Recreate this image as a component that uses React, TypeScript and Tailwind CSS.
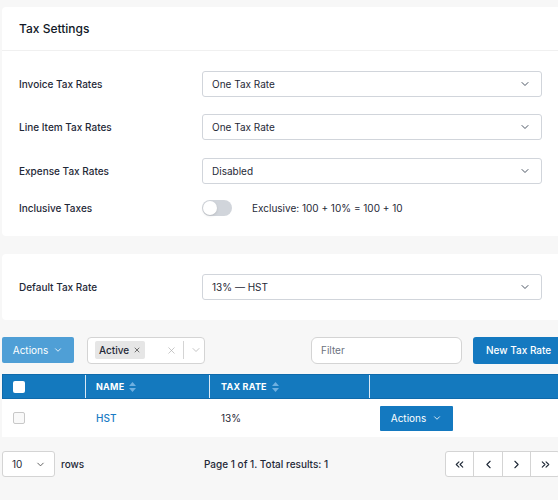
import { ChevronDown, ChevronLeft, ChevronRight, ChevronsLeft, ChevronsRight, X } from "lucide-react";

const font = { fontFamily: "Inter, 'Noto Sans', sans-serif" };

function Select({ value }: { value: string }) {
  return (
    <div className="flex h-[26px] w-[340px] items-center justify-between rounded-[3px] border border-[#d1d5db] bg-white pl-[9px] pr-[10px] text-[10px] text-[#1f2937]">
      <span>{value}</span>
      <ChevronDown className="h-[12px] w-[12px] text-[#4b5563]" strokeWidth={2} />
    </div>
  );
}

function Row({ label, children }: { label: string; children: React.ReactNode }) {
  return (
    <div className="flex items-center">
      <div className="w-[183px] text-[10px] font-medium text-[#1f2937]">{label}</div>
      {children}
    </div>
  );
}

function SortIcon() {
  return (
    <svg width="7" height="10" viewBox="0 0 7 10" className="ml-[5px]">
      <path d="M3.5 0 L7 4 H0 Z" fill="#6fb0e0" />
      <path d="M3.5 10 L7 6 H0 Z" fill="#6fb0e0" />
    </svg>
  );
}

export default function App() {
  return (
    <div className="h-[500px] w-[558px] overflow-hidden bg-[#f7f7f7]" style={font}>
      <div className="w-[600px] pl-[2px] pt-[7px]">
        {/* Tax settings card */}
        <div className="rounded-[4px] bg-white">
          <div className="flex h-[44px] items-center border-b border-[#f0f0f0] pl-[17px] text-[12px] font-medium text-[#111827]">
            Tax Settings
          </div>
          <div className="flex flex-col pl-[17px] pt-[20px] pb-[20px]">
            <Row label="Invoice Tax Rates">
              <Select value="One Tax Rate" />
            </Row>
            <div className="mt-[17px]">
              <Row label="Line Item Tax Rates">
                <Select value="One Tax Rate" />
              </Row>
            </div>
            <div className="mt-[18px]">
              <Row label="Expense Tax Rates">
                <Select value="Disabled" />
              </Row>
            </div>
            <div className="mt-[16px]">
              <Row label="Inclusive Taxes">
                <div className="flex items-center">
                  <div className="flex h-[16px] w-[30px] items-center rounded-full bg-[#d1d5db] px-[1px]">
                    <div className="h-[14px] w-[14px] rounded-full bg-white shadow-sm" />
                  </div>
                  <span className="ml-[20px] text-[10px] text-[#1f2937]">Exclusive: 100 + 10% = 100 + 10</span>
                </div>
              </Row>
            </div>
          </div>
        </div>

        {/* Default tax rate card */}
        <div className="mt-[18px] rounded-[4px] bg-white py-[20px] pl-[17px]">
          <Row label="Default Tax Rate">
            <Select value="13% — HST" />
          </Row>
        </div>

        {/* Toolbar */}
        <div className="mt-[17px] flex h-[26px] items-center whitespace-nowrap">
          <div className="flex h-[26px] w-[72px] shrink-0 items-center justify-center gap-[5px] rounded-[2px] bg-[#4f9fd6] text-[10px] text-white">
            Actions
            <ChevronDown className="h-[10px] w-[10px]" strokeWidth={2} />
          </div>
          <div className="ml-[13px] flex h-[27px] w-[118px] shrink-0 items-center rounded-[4px] border border-[#d4d4d4] bg-white pl-[7px]">
            <div className="flex h-[18px] items-center gap-[4px] rounded-[2px] bg-[#e6e6e6] px-[4px] text-[10px] font-medium text-[#1f2937]">
              Active
              <X className="h-[8px] w-[8px] text-[#555]" strokeWidth={2.5} />
            </div>
            <X className="ml-[21px] h-[11px] w-[11px] text-[#b0b0b0]" strokeWidth={1.5} />
            <div className="ml-[6px] h-[18px] w-px bg-[#d4d4d4]" />
            <ChevronDown className="ml-[6px] h-[12px] w-[12px] text-[#b0b0b0]" strokeWidth={1.5} />
          </div>
          <div className="ml-[106px] flex h-[27px] w-[151px] shrink-0 items-center rounded-[6px] border border-[#d4d4d4] bg-white pl-[9px] text-[10px] text-[#6b7280]">
            Filter
          </div>
          <div className="ml-[11px] flex h-[27px] w-[90px] shrink-0 items-center rounded-[3px] bg-[#1479c0] pl-[13px] text-[10px] font-medium text-white">
            New Tax Rate
          </div>
        </div>

        {/* Table */}
        <div className="mt-[11px] w-[590px] bg-white">
          <div className="flex h-[25px] border border-[#0f6aab] bg-[#1479be] text-[9px] font-bold tracking-wide text-white">
            <div className="flex w-[83px] items-center border-r border-[#d9e8f4] pl-[10px]">
              <div className="h-[12px] w-[12px] rounded-[2px] bg-white" />
            </div>
            <div className="flex w-[124px] items-center border-r border-[#d9e8f4] pl-[10px]">
              NAME
              <SortIcon />
            </div>
            <div className="flex w-[160px] items-center border-r border-[#d9e8f4] pl-[11px]">
              TAX RATE
              <SortIcon />
            </div>
            <div className="flex-1" />
          </div>
          <div className="flex h-[38px] items-center text-[10px]">
            <div className="flex w-[84px] items-center pl-[11px]">
              <div className="h-[12px] w-[12px] rounded-[2px] border border-[#c8c8c8] bg-[#f9f9f9]" />
            </div>
            <div className="w-[124px] pl-[10px] font-medium text-[#1a7bc4]">HST</div>
            <div className="w-[170px] pl-[11px] text-[#1f2937]">13%</div>
            <div className="flex h-[25px] w-[73px] items-center justify-center gap-[6px] rounded-[1px] bg-[#1479c0] text-[10px] text-white">
              Actions
              <ChevronDown className="h-[10px] w-[10px]" strokeWidth={2} />
            </div>
          </div>
        </div>

        {/* Pagination */}
        <div className="mt-[14px] flex h-[26px] items-center whitespace-nowrap">
          <div className="flex h-[26px] w-[53px] shrink-0 items-center justify-between rounded-[3px] border border-[#d4d4d4] bg-white pl-[9px] pr-[8px] text-[10px] text-[#1f2937]">
            10
            <ChevronDown className="h-[11px] w-[11px] text-[#555]" strokeWidth={2} />
          </div>
          <span className="ml-[6px] w-[60px] shrink-0 text-[10px] font-medium text-[#1f2937]">rows</span>
          <span className="ml-[83px] w-[200px] shrink-0 text-[10px] font-medium text-[#1f2937]">Page 1 of 1. Total results: 1</span>
          <div className="ml-[41px] flex h-[26px] shrink-0 overflow-hidden rounded-[3px] border border-[#d4d4d4] bg-white text-[#1f2937]">
            <div className="flex w-[28px] items-center justify-center border-r border-[#d4d4d4]">
              <ChevronsLeft className="h-[13px] w-[13px]" strokeWidth={2} />
            </div>
            <div className="flex w-[29px] items-center justify-center border-r border-[#d4d4d4]">
              <ChevronLeft className="h-[13px] w-[13px]" strokeWidth={2} />
            </div>
            <div className="flex w-[28px] items-center justify-center border-r border-[#d4d4d4]">
              <ChevronRight className="h-[13px] w-[13px]" strokeWidth={2} />
            </div>
            <div className="flex w-[28px] items-center justify-center">
              <ChevronsRight className="h-[13px] w-[13px]" strokeWidth={2} />
            </div>
          </div>
        </div>
      </div>
    </div>
  );
}
